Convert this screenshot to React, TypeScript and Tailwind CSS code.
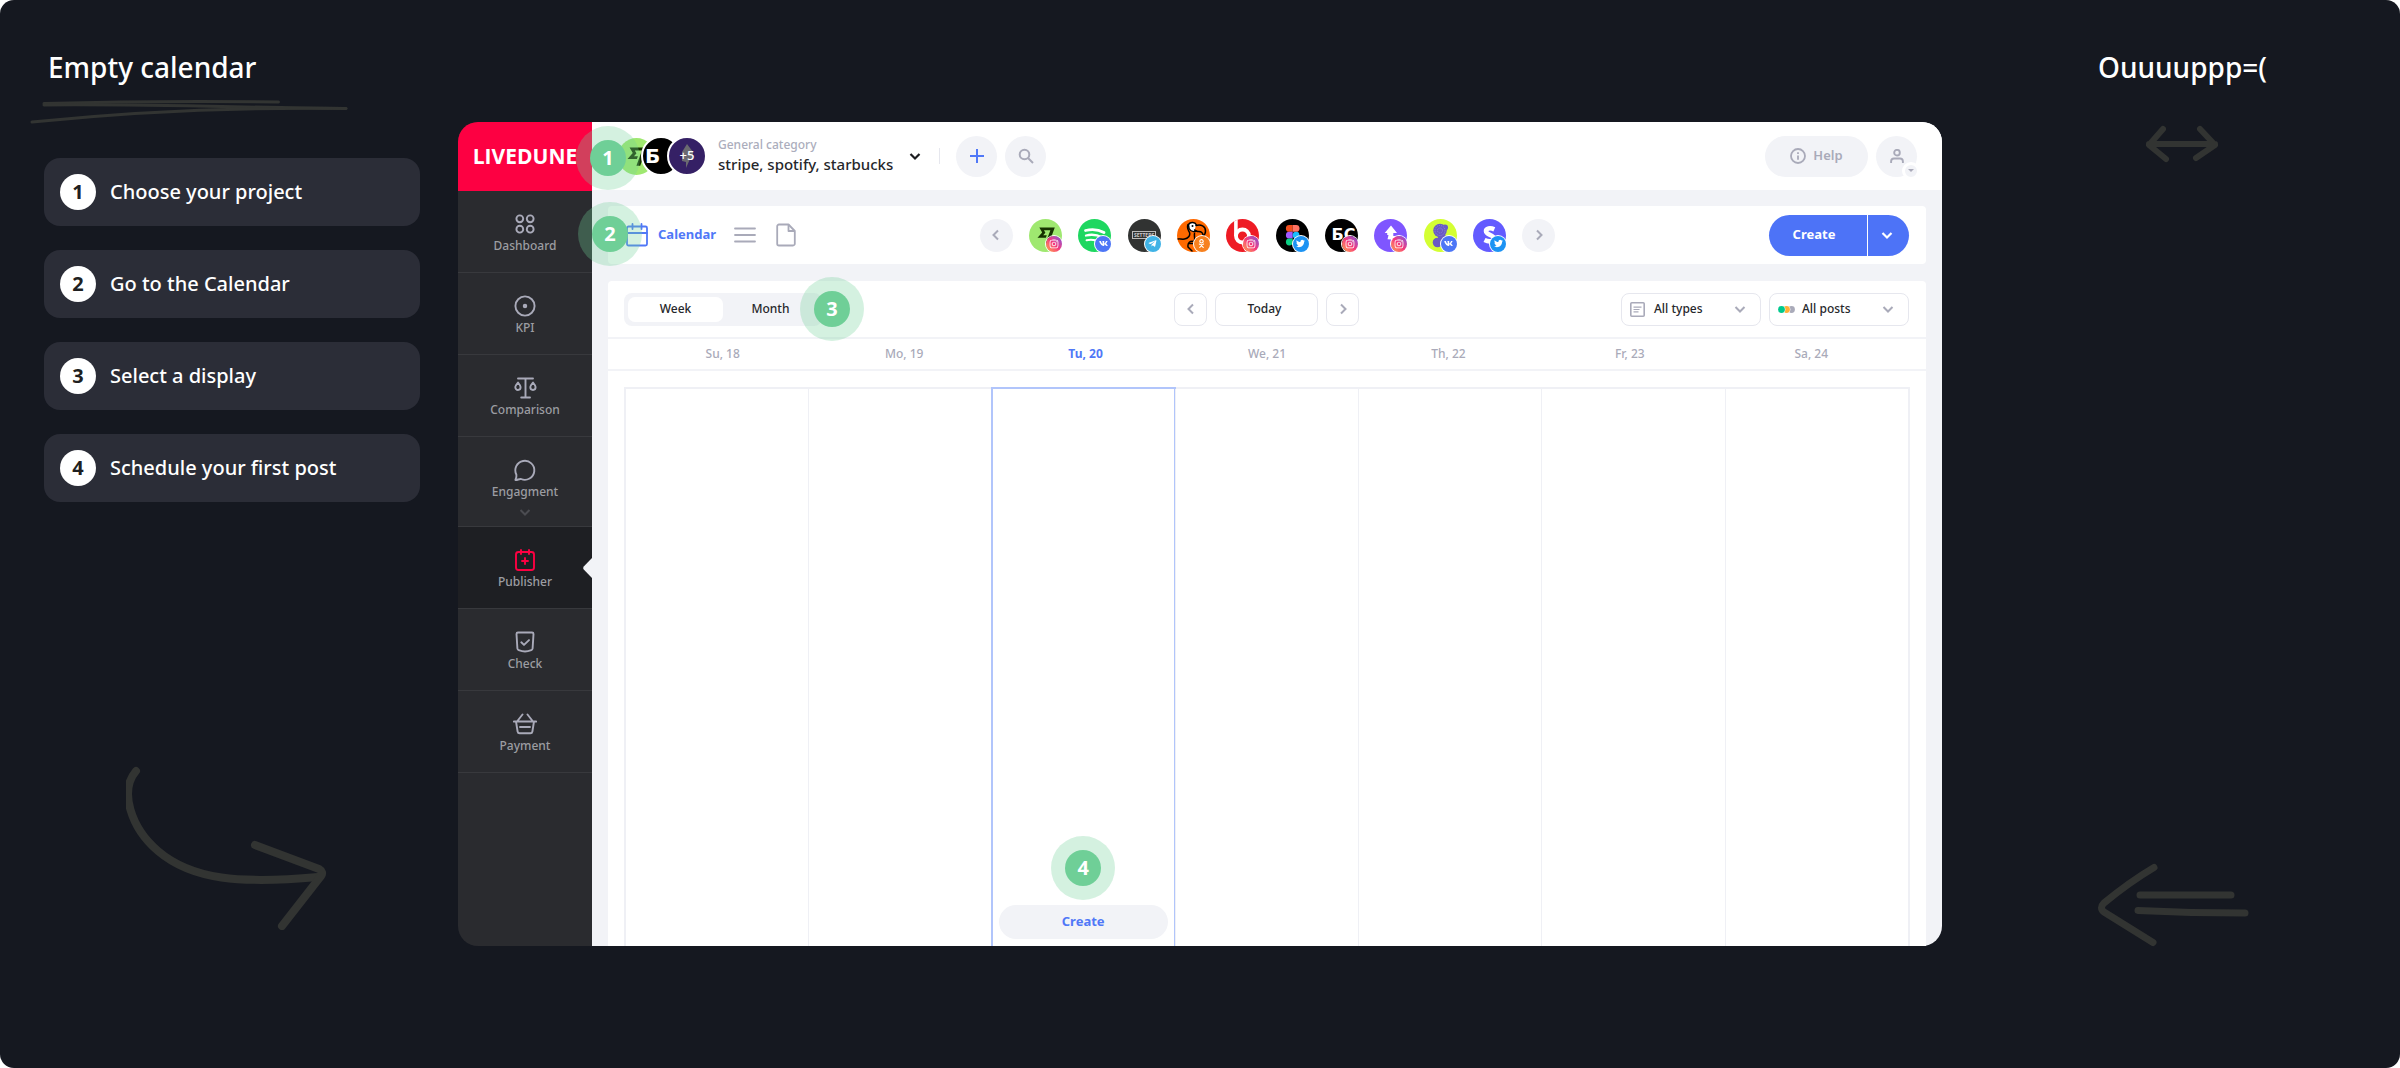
import React from 'react';
import { FaInstagram, FaVk, FaTelegramPlane, FaTwitter, FaOdnoklassniki } from 'react-icons/fa';

type Network = 'instagram' | 'vk' | 'telegram' | 'ok' | 'twitter';

interface MenuItem {
  label: string;
  icon: React.ReactNode;
  active?: boolean;
  expandable?: boolean;
}

interface Account {
  name: string;
  network: Network;
  logo: React.ReactNode;
}

const STEPS = ['Choose your project', 'Go to the Calendar', 'Select a display', 'Schedule your first post'];

const DAYS = ['Su, 18', 'Mo, 19', 'Tu, 20', 'We, 21', 'Th, 22', 'Fr, 23', 'Sa, 24'];

const TODAY_INDEX = 2;

const NavIcon: React.FC<{ children: React.ReactNode }> = ({ children }) => (
  <svg
    className="h-6 w-6"
    viewBox="0 0 24 24"
    fill="none"
    stroke="currentColor"
    strokeWidth={1.9}
    strokeLinecap="round"
    strokeLinejoin="round"
  >
    {children}
  </svg>
);

const MENU: MenuItem[] = [
  {
    label: 'Dashboard',
    icon: (
      <NavIcon>
        <circle cx="6.8" cy="6.8" r="3.4" />
        <circle cx="17.2" cy="6.8" r="3.4" />
        <circle cx="6.8" cy="17.2" r="3.4" />
        <circle cx="17.2" cy="17.2" r="3.4" />
      </NavIcon>
    ),
  },
  {
    label: 'KPI',
    icon: (
      <NavIcon>
        <circle cx="12" cy="12" r="9.6" />
        <circle cx="12" cy="12" r="1.3" fill="currentColor" />
      </NavIcon>
    ),
  },
  {
    label: 'Comparison',
    icon: (
      <NavIcon>
        <path d="M5 2.5h15M12.5 2.5v19M8.2 21.5h8.8" />
        <path d="M5 6.5c1.7 2 2.6 3.2 2.6 4.6S6.6 14 5 14s-2.7-1.4-2.7-2.9S3.3 8.5 5 6.5zM20 6.5c1.7 2 2.6 3.2 2.6 4.6S21.6 14 20 14s-2.7-1.4-2.7-2.9S18.3 8.5 20 6.5z" />
      </NavIcon>
    ),
  },
  {
    label: 'Engagment',
    expandable: true,
    icon: (
      <NavIcon>
        <path d="M8 21a9.500 9.500 0 1 0-4.600-4.300c.3 1.700-.2 3.600-1 5.300 2 .3 3.600-1.300 5.600-1z" />
      </NavIcon>
    ),
  },
  {
    label: 'Publisher',
    active: true,
    icon: (
      <NavIcon>
        <rect x="3" y="4" width="18" height="18" rx="2.5" />
        <path d="M8 2v4M16 2v4M12 10v6M9 13h6" />
      </NavIcon>
    ),
  },
  {
    label: 'Check',
    icon: (
      <NavIcon>
        <path d="M3.5 4c0-1 .5-1.500 1.500-1.500h14c1 0 1.500.5 1.500 1.500l-.9 14.500c-.1.8-.5 1.300-1.300 1.600-2 .8-4 1.400-6.300 1.400s-4.300-.6-6.300-1.400c-.8-.3-1.200-.8-1.300-1.600z" />
        <path d="M8.3 12.300l2.700 2.600 5-4.800" />
      </NavIcon>
    ),
  },
  {
    label: 'Payment',
    icon: (
      <NavIcon>
        <path d="M0.900 9.500h22.200M3 9.500l1.600 10c.2 1.200.8 1.800 2 1.800h10.800c1.200 0 1.800-.6 2-1.800l1.600-10M4 9.500L9.500 2.500M20 9.500L14.500 2.500M7 15h10" />
      </NavIcon>
    ),
  },
];

const WiseLogo = () => (
  <svg viewBox="0 0 33 33" className="h-full w-full">
    <rect width="33" height="33" fill="#9fe870" />
    <path
      transform="translate(8.500 8) scale(.72)"
      d="M6.488 7.469L0 15.050h11.585l1.301-3.576H7.922l3.033-3.507.01-.092L8.993 4.480h8.873l-6.878 18.925h4.706L24 .595H2.543z"
      fill="#163300"
    />
  </svg>
);

const ACCOUNTS: Account[] = [
  { name: 'Wise', network: 'instagram', logo: <WiseLogo /> },
  {
    name: 'Spotify',
    network: 'vk',
    logo: (
      <svg viewBox="0 0 33 33" className="h-full w-full">
        <rect width="33" height="33" fill="#1ed760" />
        <g fill="none" stroke="#fff" strokeLinecap="round">
          <path d="M7.5 11.500c6.500-1.600 13-1 18.500 2" strokeWidth="2.800" />
          <path d="M8 16.500c5.500-1.400 11-.8 16 1.800" strokeWidth="2.300" />
          <path d="M8.5 21.200c4.800-1 9-.5 13 1.700" strokeWidth="1.900" />
        </g>
      </svg>
    ),
  },
  {
    name: 'Setters',
    network: 'telegram',
    logo: (
      <span className="flex h-full w-full items-center justify-center bg-[#313332]">
        <span className="border border-[#bbbbbb] px-px text-[5px] leading-[6px] font-bold text-[#cccccc]">SETTERS</span>
      </span>
    ),
  },
  {
    name: 'Dodo',
    network: 'ok',
    logo: (
      <svg viewBox="0 0 33 33" className="h-full w-full">
        <rect width="33" height="33" fill="#ff6900" />
        <g stroke="#000" strokeWidth="1.500" strokeLinecap="round" strokeLinejoin="round" fill="none">
          <path d="M11.500 5.500c2-3 6.500-2.500 8 .5l1.500 4.500c-2 3.500-7 2.500-9-1z" fill="#fff" />
          <path d="M19 6.500c5-1.200 9.500.5 9.500 5.500 0 2.500-1 4-2.500 5 .3-3-1.500-5-5.500-4.500l-3-1.500" fill="#ff6900" />
          <path d="M11 5.500c-1.500 4 .5 6 1.500 8 1 3-1.500 6-5 6.500-2.500.5-5-.5-6.500 0M17.500 14.500c-.5 4 1 5.500-.5 8-4-1-6.500 1-6 5.500l4 4" />
          <path d="M12 24.500h6" />
        </g>
        <circle cx="15.500" cy="7" r="1" fill="#000" />
      </svg>
    ),
  },
  {
    name: 'Beats',
    network: 'instagram',
    logo: (
      <svg viewBox="0 0 33 33" className="h-full w-full">
        <rect width="33" height="33" fill="#ee1b24" />
        <circle cx="16.500" cy="17" r="6.500" fill="none" stroke="#fff" strokeWidth="3.800" />
        <path d="M9.900 0v17" stroke="#fff" strokeWidth="3.600" />
      </svg>
    ),
  },
  {
    name: 'Figma',
    network: 'twitter',
    logo: (
      <svg viewBox="0 0 33 33" className="h-full w-full">
        <rect width="33" height="33" fill="#000" />
        <path d="M16.700 6h-3.400a3.400 3.400 0 0 0 0 6.800h3.400z" fill="#f24e1e" />
        <path d="M16.700 6h3.400a3.400 3.400 0 0 1 0 6.800h-3.400z" fill="#ff7262" />
        <path d="M16.700 12.800h-3.400a3.400 3.400 0 0 0 0 6.800h3.400z" fill="#a259ff" />
        <circle cx="20.100" cy="16.200" r="3.400" fill="#1abcfe" />
        <path d="M16.700 19.600h-3.400a3.400 3.400 0 1 0 3.400 3.400z" fill="#0acf83" />
      </svg>
    ),
  },
  {
    name: 'БС',
    network: 'instagram',
    logo: (
      <span className="flex h-full w-full items-center justify-center bg-black pl-1 font-['DejaVu_Sans',sans-serif] text-base leading-none font-bold text-white">
        БС
      </span>
    ),
  },
  {
    name: 'Boost',
    network: 'instagram',
    logo: (
      <svg viewBox="0 0 33 33" className="h-full w-full">
        <rect width="33" height="33" fill="#7f56ff" />
        <path d="M17 6.500l6 7.500h-3.700v3l3.700.2-6 8.800v-5.500l-3.500-.2 1-4.300h-1.300V14h-2.500z" fill="#fff" />
      </svg>
    ),
  },
  {
    name: 'Sphere',
    network: 'vk',
    logo: (
      <svg viewBox="0 0 33 33" className="h-full w-full">
        <rect width="33" height="33" fill="#d4ff33" />
        <g fill="#6a5bc4">
          <circle cx="16" cy="11.500" r="6.800" />
          <circle cx="21" cy="8.500" r="3" />
          <circle cx="13.500" cy="23.500" r="4.800" />
          <path d="M14 16l7-1 2 6-5 7-4-3z" />
        </g>
        <g fill="none" stroke="#8d80dd" strokeDasharray="1 1">
          <circle cx="16" cy="11.500" r="5" />
          <circle cx="16" cy="11.500" r="2.500" />
        </g>
      </svg>
    ),
  },
  {
    name: 'Stripe',
    network: 'twitter',
    logo: (
      <svg viewBox="0 0 33 33" className="h-full w-full">
        <rect width="33" height="33" fill="#635bff" />
        <path
          d="M21.300 10.300c-4.300-1.900-8.300-1-8.300 1.700 0 4.300 7.700 3.300 7.700 7.300 0 3.700-5 3.700-9.200 1.700"
          fill="none"
          stroke="#fff"
          strokeWidth="4.600"
        />
      </svg>
    ),
  },
];

const NETWORK_STYLES: Record<Network, string> = {
  instagram: 'bg-gradient-to-tr from-[#ffa23c] via-[#f5357b] to-[#7d3ee0]',
  vk: 'bg-[#4d76f6]',
  telegram: 'bg-[#40b3e6]',
  ok: 'bg-[#f7811f]',
  twitter: 'bg-[#1d93f3]',
};

const getNetworkIcon = (network: Network) => {
  switch (network) {
    case 'instagram':
      return <FaInstagram className="h-[10px] w-[10px]" />;
    case 'vk':
      return <FaVk className="h-[9px] w-[9px]" />;
    case 'telegram':
      return <FaTelegramPlane className="h-[9px] w-[9px]" />;
    case 'ok':
      return <FaOdnoklassniki className="h-[9px] w-[9px]" />;
    case 'twitter':
      return <FaTwitter className="h-[9px] w-[9px]" />;
  }
};

const Chevron: React.FC<{ direction: 'left' | 'right' | 'down'; className?: string; width?: number }> = ({
  direction,
  className = '',
  width = 2,
}) => {
  const paths = {
    left: 'M8 1.500L3.500 6L8 10.500',
    right: 'M4 1.500L8.500 6L4 10.500',
    down: 'M1.500 4L6 8.500L10.500 4',
  };
  return (
    <svg className={`h-3 w-3 shrink-0 ${className}`} viewBox="0 0 12 12" fill="none" stroke="currentColor" strokeWidth={width}>
      <path d={paths[direction]} />
    </svg>
  );
};

// Numbered hint that floats over the interface
const Marker: React.FC<{ value: number; className: string }> = ({ value, className }) => (
  <span
    className={`pointer-events-none absolute z-10 flex h-16 w-16 items-center justify-center rounded-full bg-[#6fcf97]/30 ${className}`}
  >
    <span className="flex h-9 w-9 items-center justify-center rounded-full bg-[#6fcf97] text-xl font-bold text-white">
      {value}
    </span>
  </span>
);

const Guide = () => (
  <aside className="flex w-[458px] shrink-0 flex-col pb-[138px]">
    <h1 className="mt-12 ml-12 text-[28px] leading-[38px] font-medium text-white">Empty calendar</h1>
    <svg className="mt-3 ml-7 h-7 w-[324px]" viewBox="28 98 324 28" fill="none" stroke="#323432" strokeWidth="3" strokeLinecap="round">
      <path d="M44 103.500C120 101.500 200 101 278.500 102" />
      <path d="M44 105C150 104 240 107.500 346 108.500" />
      <path d="M32 122C130 112 230 107 346 108.500" />
    </svg>
    <ol className="mt-8 ml-11 flex w-[376px] flex-col gap-6">
      {STEPS.map((step, index) => (
        <li key={step} className="flex h-[68px] items-center gap-[14px] rounded-2xl bg-[#2b2d37] px-4">
          <span className="flex h-9 w-9 items-center justify-center rounded-full bg-white text-xl font-bold text-[#1f1f21]">
            {index + 1}
          </span>
          <span className="text-xl font-medium text-white">{step}</span>
        </li>
      ))}
    </ol>
    <svg
      className="mt-auto ml-[126px] h-[164px] w-[202px]"
      viewBox="126 766 202 164"
      fill="none"
      stroke="#323432"
      strokeWidth="8"
      strokeLinecap="round"
      strokeLinejoin="round"
    >
      <path d="M136 771C119 791 131 828 158 851C192 880 240 884 318 877" />
      <path d="M255 845L319 869Q324 872 321 876L282 926" />
    </svg>
  </aside>
);

const Side = () => (
  <aside className="flex w-[458px] shrink-0 flex-col pb-[120px]">
    <p className="mt-12 ml-[156px] text-[28px] leading-[38px] font-medium text-white">Ouuuuppp=(</p>
    <svg
      className="mt-[38px] ml-[203px] h-10 w-[76px]"
      viewBox="2145 123 76 40"
      fill="none"
      stroke="#323432"
      strokeWidth="6"
      strokeLinecap="round"
      strokeLinejoin="round"
    >
      <path d="M2163 128L2149 144L2166 158M2149 143H2215M2200 128L2215 144L2196 157" />
    </svg>
    <svg
      className="mt-auto ml-[155px] h-[86px] w-[154px]"
      viewBox="2097 862 154 86"
      fill="none"
      stroke="#323432"
      strokeWidth="7"
      strokeLinecap="round"
      strokeLinejoin="round"
    >
      <path d="M2154 867.500C2138 877 2121 889 2104 903Q2099 908 2104 912L2153 942.500" />
      <path d="M2140 895H2231M2138 910.500C2170 912 2200 913 2245 913" />
    </svg>
  </aside>
);

const Sidebar = () => (
  <div className="flex w-[134px] shrink-0 flex-col rounded-l-[20px] bg-[#2a2b2f]">
    <div className="flex h-[69px] items-center justify-center overflow-hidden rounded-tl-[20px] bg-[#fd0042] font-['Open_Sans',sans-serif] text-[21px] font-bold text-white">
      LIVEDUNE
    </div>
    <nav>
      {MENU.map((item) => (
        <a
          key={item.label}
          href="#"
          className={`relative flex flex-col items-center border-b border-[#38393d] pt-[21px] text-xs leading-5 font-medium text-[#9c9da2] ${
            item.expandable ? 'h-[90px]' : 'h-[82px]'
          } ${item.active ? 'bg-[#1e1f23]' : ''}`}
        >
          <span className={item.active ? 'text-[#fd0042]' : 'text-[#a9aab9]'}>{item.icon}</span>
          {item.label}
          {item.expandable && <Chevron direction="down" className="mt-1 text-[#4b4c51]" />}
          {item.active && (
            <svg className="absolute top-[31px] right-0 h-5 w-[9px]" viewBox="0 0 9 20">
              <path d="M9 0L1 8.200Q-.6 10 1 11.800L9 20z" fill="#f2f3f7" />
            </svg>
          )}
        </a>
      ))}
    </nav>
  </div>
);

const TopBar = () => (
  <header className="relative flex h-[68px] items-center rounded-tr-[20px] bg-white pr-[25px]">
    <Marker value={1} className="top-1 -left-4" />
    <button type="button" className="flex items-center text-left">
      <span className="ml-[26px] flex items-center">
        <span className="h-[37px] w-[37px] overflow-hidden rounded-full">
          <WiseLogo />
        </span>
        <span className="-ml-[14px] flex h-10 w-10 items-center rounded-full border-2 border-white bg-black pl-[2px] font-['DejaVu_Sans',sans-serif] text-xl leading-none font-bold text-white">
          Б
        </span>
        <span className="-ml-[14px] flex h-10 w-10 items-center justify-center rounded-full border-2 border-white bg-[#352065]">
          <svg className="absolute h-6 w-4" viewBox="0 0 16 24" fill="#6b6a70">
            <path d="M8 0l6 8v7h-3L7 24v-6l-4-1V8z" />
          </svg>
          <span className="relative text-[13px] font-medium text-white">+5</span>
        </span>
      </span>
      <span className="ml-[11px] flex flex-col pb-[2px]">
        <span className="text-xs leading-[18px] font-medium text-[#abadbc]">General category</span>
        <span className="text-[15px] leading-5 font-medium text-[#26272b]">stripe, spotify, starbucks</span>
      </span>
      <Chevron direction="down" className="ml-4 text-[#1c1d20]" width={2.2} />
    </button>
    <span className="ml-[18px] h-4 w-px bg-[#e6e7ee]" />
    <button type="button" aria-label="Add" className="ml-4 flex h-[41px] w-[41px] items-center justify-center rounded-full bg-[#f2f3f7] text-[#5078f7]">
      <svg className="h-[14px] w-[14px]" viewBox="0 0 14 14" stroke="currentColor" strokeWidth="2">
        <path d="M7 0v14M0 7h14" />
      </svg>
    </button>
    <button type="button" aria-label="Search" className="ml-2 flex h-[41px] w-[41px] items-center justify-center rounded-full bg-[#f2f3f7] text-[#a9aab9]">
      <svg className="h-4 w-4" viewBox="0 0 16 16" fill="none" stroke="currentColor" strokeWidth="2">
        <circle cx="6.500" cy="6.500" r="4.800" />
        <path d="M10 10l5 5" />
      </svg>
    </button>
    <button type="button" className="ml-auto flex h-[41px] w-[103px] items-center justify-center gap-[7px] rounded-full bg-[#f2f3f7] text-[13px] font-semibold text-[#a9aab9]">
      <svg className="h-4 w-4" viewBox="0 0 16 16" fill="none" stroke="currentColor" strokeWidth="1.800">
        <circle cx="8" cy="8" r="7" />
        <path d="M8 7.500v4.300M8 4.200v1.800" />
      </svg>
      Help
    </button>
    <button type="button" aria-label="Profile" className="relative ml-2 flex h-[41px] w-[41px] items-center justify-center rounded-full bg-[#f2f3f7] text-[#a9aab9]">
      <svg className="h-[14px] w-[14px]" viewBox="0 0 14 14" fill="none" stroke="currentColor" strokeWidth="1.900">
        <circle cx="7" cy="3.700" r="2.800" />
        <path d="M1.100 14v-1.500C1.100 10.500 2.200 9.500 4 9.500h6c1.800 0 2.900 1 2.900 3V14" />
      </svg>
      <span className="absolute -right-[3px] -bottom-[3px] flex h-[18px] w-[18px] items-center justify-center rounded-full border-[3px] border-white bg-[#f2f3f7]">
        <svg className="h-[3px] w-[6px]" viewBox="0 0 6 3" fill="currentColor">
          <path d="M0 0h6L3 3z" />
        </svg>
      </span>
    </button>
  </header>
);

const Toolbar = () => (
  <div className="relative flex h-[58px] items-center justify-between rounded bg-white pr-[17px] pl-[18px]">
    <Marker value={2} className="-top-1 -left-[30px]" />
    <div className="flex flex-1 items-center">
      <a href="#" className="flex items-center gap-[10px] text-[13px] font-bold text-[#5078f7]">
        <svg className="h-6 w-[22px]" viewBox="0 0 22 24" fill="none" stroke="currentColor" strokeWidth="1.800" strokeLinecap="round">
          <rect x="1" y="3.500" width="20" height="19" rx="1.500" />
          <path d="M1 10h20M6.500 1v5M15.500 1v5" />
        </svg>
        Calendar
      </a>
      <button type="button" aria-label="List" className="ml-[18px] text-[#a9aab9]">
        <svg className="h-4 w-[22px]" viewBox="0 0 22 16" fill="none" stroke="currentColor" strokeWidth="1.800" strokeLinecap="round">
          <path d="M1 1.500h20M1 8h20M1 14.500h20" />
        </svg>
      </button>
      <button type="button" aria-label="Drafts" className="ml-5 text-[#a9aab9]">
        <svg className="h-6 w-5" viewBox="0 0 20 24" fill="none" stroke="currentColor" strokeWidth="1.800" strokeLinejoin="round">
          <path d="M12.500 1.500H3A1.800 1.800 0 0 0 1.200 3.300v17.400A1.800 1.800 0 0 0 3 22.500h14a1.800 1.800 0 0 0 1.800-1.800V8z" />
          <path d="M12.500 1.500V8h6.300" />
        </svg>
      </button>
    </div>

    {/* connected accounts */}
    <div className="flex w-[576px] items-center justify-between">
      <button type="button" aria-label="Previous accounts" className="flex h-[33px] w-[33px] items-center justify-center rounded-full bg-[#f2f3f7] text-[#a9aab9]">
        <Chevron direction="left" />
      </button>
      {ACCOUNTS.map((account) => (
        <button key={account.name} type="button" aria-label={account.name} className="relative h-[33px] w-[33px]">
          <span className="block h-full w-full overflow-hidden rounded-full">{account.logo}</span>
          <span
            className={`absolute right-0 bottom-0 flex h-4 w-4 items-center justify-center rounded-full text-white ring-1 ring-white ${NETWORK_STYLES[account.network]}`}
          >
            {getNetworkIcon(account.network)}
          </span>
        </button>
      ))}
      <button type="button" aria-label="Next accounts" className="flex h-[33px] w-[33px] items-center justify-center rounded-full bg-[#f2f3f7] text-[#a9aab9]">
        <Chevron direction="right" />
      </button>
    </div>

    <div className="flex flex-1 justify-end">
      <div className="flex h-[41px] w-[140px] overflow-hidden rounded-full bg-[#4d73f7] text-[13px] font-bold text-white">
        <button type="button" className="flex-1 pr-2">
          Create
        </button>
        <button type="button" aria-label="More create options" className="flex w-[42px] items-center justify-center border-l border-white pr-1">
          <Chevron direction="down" width={2.2} />
        </button>
      </div>
    </div>
  </div>
);

const Filter: React.FC<{ label: string; icon: React.ReactNode }> = ({ label, icon }) => (
  <button
    type="button"
    className="flex h-[33px] w-[140px] items-center rounded-lg border border-[#e6e7ee] pr-[14px] pl-2 text-xs font-medium text-[#26272b]"
  >
    <span className="flex w-6 items-center">{icon}</span>
    <span className="flex-1 text-left">{label}</span>
    <Chevron direction="down" className="text-[#a9aab9]" />
  </button>
);

const Calendar = () => (
  <section className="flex flex-1 flex-col rounded-t bg-white">
    <div className="flex h-[58px] items-center border-b-2 border-[#f2f3f7] pr-[17px] pl-4">
      <div className="flex flex-1">
        <div className="relative flex h-[33px] w-[198px] rounded-lg bg-[#f2f3f7] p-1 text-xs font-medium text-[#26272b]">
          <button type="button" className="flex-1 rounded-[7px] bg-white">
            Week
          </button>
          <button type="button" className="flex-1">
            Month
          </button>
          <Marker value={3} className="-top-4 -right-[42px]" />
        </div>
      </div>
      <div className="flex gap-2">
        <button type="button" aria-label="Previous week" className="flex h-[33px] w-[33px] items-center justify-center rounded-lg border border-[#e6e7ee] text-[#a9aab9]">
          <Chevron direction="left" />
        </button>
        <button type="button" className="h-[33px] w-[103px] rounded-lg border border-[#e6e7ee] pr-1 text-xs font-medium text-[#26272b]">
          Today
        </button>
        <button type="button" aria-label="Next week" className="flex h-[33px] w-[33px] items-center justify-center rounded-lg border border-[#e6e7ee] text-[#a9aab9]">
          <Chevron direction="right" />
        </button>
      </div>
      <div className="flex flex-1 justify-end gap-2">
        <Filter
          label="All types"
          icon={
            <svg className="h-[15px] w-[15px] text-[#a9aab9]" viewBox="0 0 15 15" fill="none" stroke="currentColor" strokeWidth="1.600">
              <rect x=".8" y=".8" width="13.400" height="13.400" rx="1" />
              <path d="M3.500 5.200h8M3.500 7.500h6M3.500 9.800h5" strokeWidth="1.200" />
            </svg>
          }
        />
        <Filter
          label="All posts"
          icon={
            <svg className="h-[7px] w-[17px]" viewBox="0 0 17 7">
              <circle cx="13.500" cy="3.500" r="3.400" fill="#a9aab9" />
              <circle cx="8.500" cy="3.500" r="3.900" fill="#fff" />
              <circle cx="8.500" cy="3.500" r="3.400" fill="#ffb038" />
              <circle cx="3.500" cy="3.500" r="3.900" fill="#fff" />
              <circle cx="3.500" cy="3.500" r="3.400" fill="#00c98d" />
            </svg>
          }
        />
      </div>
    </div>

    <div className="grid h-8 grid-cols-7 items-center border-b-2 border-[#f2f3f7] px-6 text-center text-xs font-medium text-[#a9aab9]">
      {DAYS.map((day, index) => (
        <span key={day} className={index === TODAY_INDEX ? 'font-bold text-[#5078f7]' : ''}>
          {day}
        </span>
      ))}
    </div>

    <div className="mx-4 mt-4 grid flex-1 grid-cols-7 border-t-2 border-r-2 border-l border-[#eff0f5]">
      {DAYS.map((day, index) =>
        index === TODAY_INDEX ? (
          <div key={day} className="-mx-px -mt-[2px] flex flex-col items-center justify-end border-2 border-b-0 border-[#b1c5fb] px-[6px] pb-[7px]">
            <div className="relative w-full">
              <Marker value={4} className="-top-[69px] left-1/2 -translate-x-1/2" />
              <button type="button" className="h-[34px] w-full rounded-full bg-[#f2f3f7] text-[13px] font-bold text-[#5078f7]">
                Create
              </button>
            </div>
          </div>
        ) : (
          <div key={day} className="border-l border-[#eff0f5]" />
        ),
      )}
    </div>
  </section>
);

const App: React.FC = () => {
  return (
    <div className="bg-white font-['Noto_Sans',sans-serif]">
      <div className="flex min-h-screen rounded-[14px] bg-[#151820]">
        <Guide />
        <main className="flex min-w-0 flex-1 py-[122px]">
          <Sidebar />
          <div className="flex min-w-0 flex-1 flex-col rounded-r-[20px] bg-[#f2f3f7]">
            <TopBar />
            <div className="flex flex-1 flex-col gap-[17px] px-4 pt-4">
              <Toolbar />
              <Calendar />
            </div>
          </div>
        </main>
        <Side />
      </div>
    </div>
  );
};

export default App;
